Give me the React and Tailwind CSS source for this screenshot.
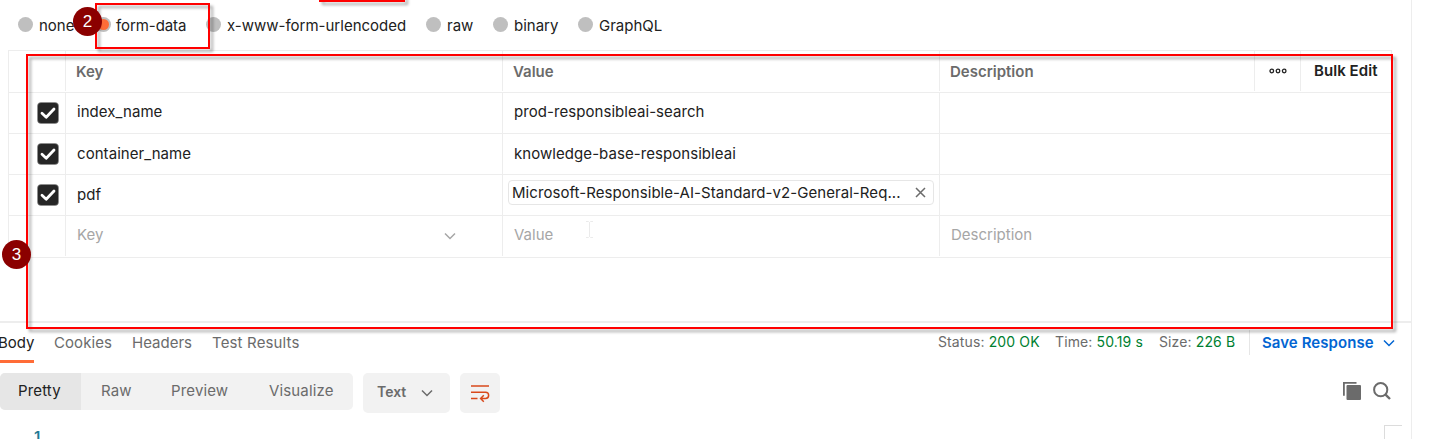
const modes = [
  { label: 'none', width: 'w-[78px]' },
  { label: 'form-data', width: 'w-[110px] tracking-[-0.08px]', selected: true },
  { label: 'x-www-form-urlencoded', width: 'w-[220px]' },
  { label: 'raw', width: 'w-[67px]' },
  { label: 'binary', width: 'w-[85px]' },
  { label: 'GraphQL', width: 'w-[90px]' },
];

const columns =
  'grid grid-cols-[57px_437px_437px_1fr] border-b border-[#ededed]';

function Chevron({ className }) {
  return (
    <svg className={className} width="14" height="10" viewBox="0 0 14 10" fill="none" stroke="currentColor" strokeWidth="1.5">
      <path d="M2 2.5 7 7.5 12 2.5" />
    </svg>
  );
}

function Checkbox() {
  return (
    <svg className="block" width="22" height="22" viewBox="0 0 22 22">
      <rect x="0.5" y="0.5" width="21" height="21" rx="3.5" fill="#262626" stroke="#8c8c8c" strokeOpacity="0.6" />
      <path d="M5 11.3 9.2 15.2 17 7" fill="none" stroke="#fff" strokeWidth="2.8" strokeLinecap="round" strokeLinejoin="round" />
    </svg>
  );
}

function Row({ name, children, cell = '' }) {
  return (
    <div className={`${columns} h-[41px]`}>
      <div className="flex items-center justify-end border-r border-[#ededed] pr-[6px] pb-px">
        <Checkbox />
      </div>
      <div className={`flex items-center border-r border-[#ededed] pl-[11px] tracking-[0.06px] ${cell}`}>{name}</div>
      <div className={`flex items-center border-r border-[#ededed] pl-[11px] tracking-[0.06px] ${cell}`}>{children}</div>
      <div />
    </div>
  );
}

function Table() {
  return (
    <div className="ml-2 h-[271px] w-[1384px]">
      <div className="border border-b-0 border-[#ededed]">
        <div className="grid h-[42px] grid-cols-[57px_437px_437px_315px_46px_1fr] border-b border-[#ededed] font-semibold text-[#6b6b6b]">
          <div className="mb-px border-r border-[#ededed]" />
          <div className="mb-px flex items-center border-r border-[#ededed] pl-[10px] pt-px">Key</div>
          <div className="mb-px flex items-center border-r border-[#ededed] pl-[10px] pt-px">Value</div>
          <div className="mb-px flex items-center border-r border-[#ededed] pl-[10px] pt-px">Description</div>
          <div className="mb-px flex items-center justify-center border-r border-[#ededed]">
            <svg width="18" height="6" viewBox="0 0 18 6" fill="none" stroke="#212121" strokeWidth="1.3">
              <circle cx="2.8" cy="3" r="1.8" />
              <circle cx="9" cy="3" r="1.8" />
              <circle cx="15.2" cy="3" r="1.8" />
            </svg>
          </div>
          <div className="flex items-center pl-[13px] pb-px text-[#212121] tracking-[0.06px]">Bulk Edit</div>
        </div>
        <Row name="index_name" cell="pb-[2px]">prod-responsibleai-search</Row>
        <Row name="container_name">knowledge-base-responsibleai</Row>
        <Row name="pdf">
          <div className="-ml-[6px] mb-[5px] flex h-[25px] w-[426px] items-center justify-between rounded-[4px] border border-[#e6e6e6] pl-[3px] pr-[7px]">
            <span>Microsoft-Responsible-AI-Standard-v2-General-Req...</span>
            <svg width="11" height="11" viewBox="0 0 11 11" stroke="#6b6b6b" strokeWidth="1.5">
              <path d="M1 1 10 10M10 1 1 10" />
            </svg>
          </div>
        </Row>
        <div className={`${columns} h-[42px] text-[#a6a6a6]`}>
          <div className="mb-px border-r border-[#ededed]" />
          <div className="mb-px flex items-center justify-between border-r border-[#ededed] pl-[11px] pr-[45px] pb-[2px]">
            Key
            <Chevron className="mt-[2px]" />
          </div>
          <div className="mb-px flex items-center border-r border-[#ededed] pl-[11px] pb-[2px]">
            Value
            <svg className="-mt-[11px] ml-[32px]" width="9" height="17" viewBox="0 0 9 17" fill="none" stroke="#ebebeb">
              <path d="M1 .5h2.500l1 1 1-1H8M4.500 1v15M1 16.500h2.500l1-1 1 1H8" />
            </svg>
          </div>
          <div className="flex items-center pl-[11px] pb-[3px]">Description</div>
        </div>
      </div>
    </div>
  );
}

function Metric({ label, value, className }) {
  return (
    <div className={`${className} whitespace-pre text-[14px] tracking-[0.12px]`}>
      {label} <span className="text-[#007f31]">{value}</span>
    </div>
  );
}

function ResponseHeader() {
  return (
    <div className="flex h-[40px] text-[#6b6b6b]">
      <div className="w-[54px]">
        <div className="h-[40px] w-[34px] border-b-[3px] border-[#ff6c37] pt-[8px] text-[#212121]">
          <div className="-ml-[2px]">Body</div>
        </div>
      </div>
      <div className="w-[78px] pt-[8px] tracking-[0.08px]">Cookies</div>
      <div className="w-[80px] pt-[8px]">Headers</div>
      <div className="w-[726px] pt-[8px] tracking-[0.15px]">Test Results</div>
      <Metric className="w-[117px] pt-[7px]" label="Status:" value="200 OK" />
      <Metric className="w-[104px] pt-[7px]" label="Time:" value="50.19 s" />
      <Metric className="w-[90px] pt-[7px]" label="Size:" value="226 B" />
      <div className="mt-[7px] flex h-[25px] items-center border-l border-[#e6e6e6] pl-[12px] font-semibold text-[#0265d2]">
        <div className="w-[120px] tracking-[0.07px]">Save Response</div>
        <Chevron className="mt-px" />
      </div>
    </div>
  );
}

function Toolbar() {
  return (
    <div className="mt-[10px] flex h-[52px] items-start text-[#6b6b6b]">
      <div className="flex h-[37px] w-[353px] items-center overflow-hidden rounded-[5px] bg-[#f2f2f2] tracking-[0.15px]">
        <div className="flex h-full w-[81px] items-center bg-[#e6e6e6] pl-[18px] pb-[2px] text-[#212121]">Pretty</div>
        <div className="w-[70px] pl-[20px] pb-[2px]">Raw</div>
        <div className="w-[98px] pl-[20px] pb-[2px]">Preview</div>
        <div className="pl-[20px] pb-[2px]">Visualize</div>
      </div>
      <div className="ml-[10px] flex h-[40px] w-[87px] items-center justify-between rounded-[5px] bg-[#f2f2f2] pl-[14px] pr-[16px] pb-[2px] text-[14px] font-semibold">
        Text
        <Chevron className="mt-px" />
      </div>
      <div className="ml-[10px] flex size-[40px] items-center justify-center rounded-[5px] bg-[#f2f2f2]">
        <svg width="20" height="20" viewBox="0 0 20 20" fill="none" stroke="#d9491c" strokeWidth="1.5">
          <path d="M1 3h18M1 9.200h14.500a3 3 0 0 1 0 6.300H11M1 15.500h6.500M13.800 12.300l-3.200 3.200 3.200 3.200" />
        </svg>
      </div>
      <svg className="mt-[9px] ml-[843px]" width="18" height="18" viewBox="0 0 18 18" fill="#6b6b6b">
        <path d="M0 0h13.500v1.800H1.800v12H0z" />
        <rect x="3.500" y="3" width="14.500" height="15" rx="1" />
      </svg>
      <svg className="mt-[9px] ml-[12px]" width="18" height="18" viewBox="0 0 18 18" fill="none" stroke="#6b6b6b" strokeWidth="2">
        <circle cx="7.700" cy="7.700" r="6.600" />
        <path d="m12.300 12.300 4.700 4.700" strokeWidth="2.400" />
      </svg>
    </div>
  );
}

const frame =
  'absolute border-2 border-[#ff0000] filter-[drop-shadow(3px_3px_1.5px_rgba(0,0,0,0.35))]';
const marker =
  'absolute flex size-[29px] items-center justify-center rounded-full bg-[#8b0000] font-["Liberation_Sans",sans-serif] text-[17px] text-white';

export default function App() {
  return (
    <div className='relative h-[439px] w-[1442px] overflow-hidden bg-white font-["Inter",sans-serif] text-[15px] leading-[24px] whitespace-nowrap text-[#212121]'>
      <div className="h-full w-[1412px] border-r border-[#ededed]">
        <div className="flex h-[50px] pl-[18px]">
          {modes.map((mode) => (
            <div key={mode.label} className={`${mode.width} flex h-[50px] items-center gap-[6px] pb-px`}>
              <span className="flex size-[15px] shrink-0 items-center justify-center rounded-full bg-[#bfbfbf]">
                {mode.selected && <span className="size-[11px] rounded-full bg-[#ff6c37]" />}
              </span>
              <span className={mode.selected ? '-ml-px pt-[2px]' : 'pt-[2px]'}>{mode.label}</span>
            </div>
          ))}
        </div>
        <Table />
        <div className="h-[2px] bg-[#ededed]" />
        <ResponseHeader />
        <Toolbar />
        <div className="flex h-[14px] justify-between overflow-hidden pr-[9px]">
          <div className="pl-[34px] text-[15px] font-semibold text-[#237893]">1</div>
          <div className="h-[14px] w-[18px] border-t border-l border-[#dcdcdc]" />
        </div>
      </div>

      <div className={`${frame} -top-[20px] left-[319px] h-[22px] w-[86px]`} />
      <div className={`${frame} top-[3px] left-[95px] h-[46px] w-[115px]`} />
      <div className={`${frame} top-[54px] left-[26px] h-[275px] w-[1367px]`} />
      <div className={`${marker} top-[7px] left-[73px]`}>2</div>
      <div className={`${marker} top-[240px] left-[2px]`}>3</div>
    </div>
  );
}
